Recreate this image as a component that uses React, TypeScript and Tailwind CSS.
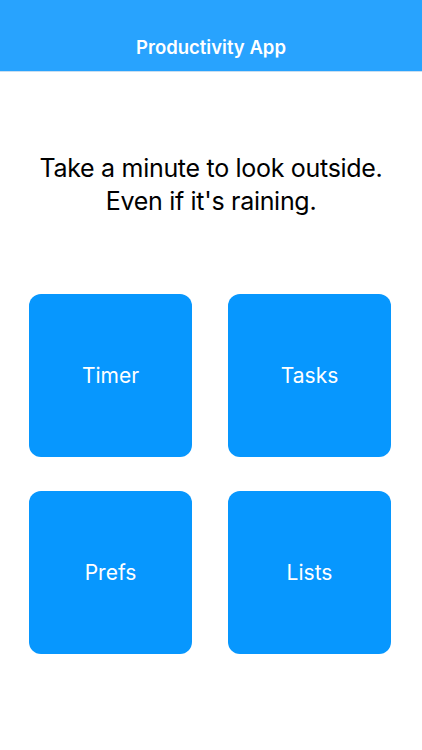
import React from "react";

const Tile = ({ label }: { label: string }) => (
  <button className="w-[163px] h-[163px] rounded-[12px] bg-[#0797fe] flex items-center justify-center text-white text-[21px] font-normal">
    {label}
  </button>
);

export default function App() {
  return (
    <div className="w-[422px] h-[750px] bg-white flex flex-col" style={{ fontFamily: "Inter, 'Noto Sans', sans-serif" }}>
      <div className="h-[72px] bg-[#28a3fe] border-b border-[#c9def0] flex items-end justify-center pb-[9px]">
        <span className="text-white text-[18.5px] font-semibold">Productivity App</span>
      </div>
      <div className="pt-[80px] text-center text-black text-[25px] leading-[33px] tracking-[-0.3px]">
        <p>Take a minute to look outside.</p>
        <p>Even if it's raining.</p>
      </div>
      <div className="mt-[76px] grid grid-cols-[163px_163px] gap-x-[36px] gap-y-[34px] pl-[29px]">
        <Tile label="Timer" />
        <Tile label="Tasks" />
        <Tile label="Prefs" />
        <Tile label="Lists" />
      </div>
    </div>
  );
}
